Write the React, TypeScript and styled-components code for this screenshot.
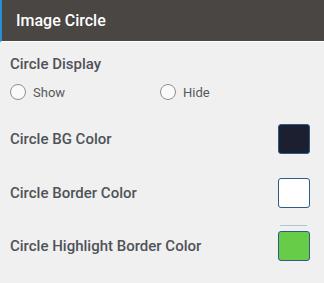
import React from 'react'
import styled, { createGlobalStyle } from 'styled-components'

const GlobalStyle = createGlobalStyle`
  html, body {
    margin: 0;
    padding: 0;
    background: #f0f0f0;
  }
  * {
    box-sizing: border-box;
  }
`

const Panel = styled.div`
  width: 324px;
  height: 283px;
  background: #f0f0f0;
  font-family: Roboto, 'Liberation Sans', sans-serif;
  color: #50555b;
`

const Header = styled.div`
  height: 42px;
  display: flex;
  align-items: center;
  padding-left: 14px;
  background: #4a4644;
  border-left: 2px solid #2b8ed0;
  border-bottom: 1px solid #ffffff;
`

const Title = styled.h2`
  margin: 0;
  font-size: 16px;
  font-weight: 500;
  color: #ffffff;
`

const Body = styled.div`
  padding: 13px 14px 0 10px;
`

const Label = styled.div`
  font-size: 15px;
  font-weight: 500;
  color: #4f5358;
`

const RadioGroup = styled.div`
  display: grid;
  grid-template-columns: 150px 1fr;
  margin-top: 11px;
`

const RadioOption = styled.label`
  display: flex;
  align-items: center;
  gap: 7px;
  font-size: 13px;
  color: #555a60;
`

const RadioCircle = styled.span`
  width: 16px;
  height: 16px;
  border-radius: 50%;
  border: 1px solid #8c8f94;
  background: #fafafa;
`

const ColorRow = styled.div<{ $top: number }>`
  display: flex;
  align-items: center;
  justify-content: space-between;
  margin-top: ${p => p.$top}px;
`

const Swatch = styled.div<{ $color: string }>`
  width: 32px;
  height: 30px;
  border-radius: 3px;
  border: 1px solid #2d5b85;
  background: ${p => p.$color};
`

const SwatchWrap = styled.div`
  position: relative;
`

const Divider = styled.div`
  position: absolute;
  left: 2px;
  right: 3px;
  top: -6px;
  height: 1px;
  background: #b7c2cc;
`

const colors = [
  { label: 'Circle BG Color', color: '#1c1f30', top: 24 },
  { label: 'Circle Border Color', color: '#ffffff', top: 24 },
  { label: 'Circle Highlight Border Color', color: '#67cc48', top: 23 }
]

const App = () => (
  <Panel>
    <GlobalStyle />
    <Header>
      <Title>Image Circle</Title>
    </Header>
    <Body>
      <Label>Circle Display</Label>
      <RadioGroup>
        <RadioOption>
          <RadioCircle />
          Show
        </RadioOption>
        <RadioOption>
          <RadioCircle />
          Hide
        </RadioOption>
      </RadioGroup>
      {colors.map((c, i) => (
        <ColorRow key={c.label} $top={c.top}>
          <Label>{c.label}</Label>
          <SwatchWrap>
            {i === 2 && <Divider />}
            <Swatch $color={c.color} />
          </SwatchWrap>
        </ColorRow>
      ))}
    </Body>
  </Panel>
)

export default App
